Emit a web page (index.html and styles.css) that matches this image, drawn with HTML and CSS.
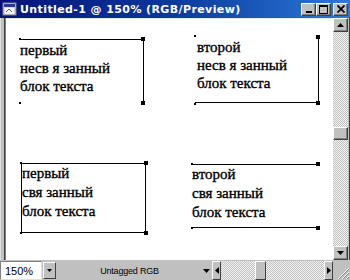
FILE: index.html
```html
<!DOCTYPE html>
<html>
<head>
<meta charset="utf-8">
<link rel="stylesheet" href="styles.css">
</head>
<body>
<div class="window">
  <div class="titlebar">
    <svg class="appicon" width="15" height="14" viewBox="0 0 15 14">
      <rect x="1" y="1" width="13" height="12" fill="#d8d8d8" stroke="#808080"/>
      <rect x="2" y="2" width="11" height="3" fill="#2a3a8a"/>
      <rect x="3" y="6" width="9" height="6" fill="#f4f4f4"/>
      <path d="M4 10 L7 7 L10 10" fill="none" stroke="#606060"/>
    </svg>
    <span class="title">Untitled-1 @ 150% (RGB/Preview)</span>
    <div class="winbtns">
      <span class="wbtn"><svg width="8" height="8" viewBox="0 0 8 8"><rect x="1" y="6" width="6" height="2" fill="#000"/></svg></span>
      <span class="wbtn"><svg width="9" height="9" viewBox="0 0 9 9"><rect x="0.5" y="0.5" width="8" height="8" fill="none" stroke="#000"/><rect x="0" y="0" width="9" height="2" fill="#000"/></svg></span>
      <span class="wbtn gap"><svg width="8" height="8" viewBox="0 0 8 8"><path d="M0.5 0.5 L7.5 7.5 M7.5 0.5 L0.5 7.5" stroke="#000" stroke-width="1.8"/></svg></span>
    </div>
  </div>
  <div class="main">
    <div class="frame-left"></div>
    <div class="canvas">
      <div class="tf tf1">
        первый<br>несв я занный<br>блок текста
        <span class="h dot tl"></span><span class="h sq tr"></span>
        <span class="h dot bl"></span><span class="h sq br"></span>
      </div>
      <div class="tf tf2">
        второй<br>несв я занный<br>блок текста
        <span class="h dot tl"></span><span class="h sq tr"></span>
        <span class="h dot bl"></span><span class="h sq br"></span>
      </div>
      <div class="tf tf3">
        первый<br>свя занный<br>блок текста
        <span class="h dot tl"></span><span class="h sq tr"></span>
        <span class="h dot bl"></span><span class="h sq br"></span>
      </div>
      <div class="tf tf4">
        второй<br>свя занный<br>блок текста
        <span class="h dot tl"></span><span class="h sq tr"></span>
        <span class="h dot bl"></span><span class="h sq br"></span>
      </div>
    </div>
    <div class="vscroll">
      <div class="sbtn"><svg width="7" height="4" viewBox="0 0 7 4"><path d="M3.5 0 L7 4 L0 4 Z" fill="#000"/></svg></div>
      <div class="vtrack"><div class="vthumb"></div></div>
      <div class="sbtn"><svg width="7" height="4" viewBox="0 0 7 4"><path d="M0 0 L7 0 L3.5 4 Z" fill="#000"/></svg></div>
    </div>
    <div class="frame-right"></div>
  </div>
  <div class="status">
    <div class="zoomfield">150%</div>
    <div class="ddbtn"><svg width="5" height="3" viewBox="0 0 5 3"><path d="M0 0 L5 0 L2.5 3 Z" fill="#000"/></svg></div>
    <div class="docinfo">Untagged RGB</div>
    <div class="infoarrow"><svg width="7" height="4" viewBox="0 0 7 4"><path d="M0 0 L7 0 L3.5 4 Z" fill="#000"/></svg></div>
    <div class="hscroll">
      <div class="hbtn"><svg width="4" height="7" viewBox="0 0 4 7"><path d="M4 0 L4 7 L0 3.5 Z" fill="#000"/></svg></div>
      <div class="htrack a"></div>
      <div class="hthumb"></div>
      <div class="htrack b"></div>
      <div class="hbtn"><svg width="4" height="7" viewBox="0 0 4 7"><path d="M0 0 L0 7 L4 3.5 Z" fill="#000"/></svg></div>
    </div>
    <div class="grip">
      <svg width="15" height="15" viewBox="0 0 15 15">
        <path d="M14 3 L3 14 M14 7 L7 14 M14 11 L11 14" stroke="#fff" stroke-width="1"/>
        <path d="M14 4 L4 14 M14 8 L8 14 M14 12 L12 14" stroke="#808080" stroke-width="1"/>
      </svg>
    </div>
  </div>
</div>
</body>
</html>
```

FILE: styles.css
```css
* { box-sizing: border-box; }
html, body { margin: 0; padding: 0; background: #c0c0c0; }
.window {
  width: 350px; height: 280px;
  display: flex; flex-direction: column;
  background: #c0c0c0;
  overflow: hidden;
}
.titlebar {
  height: 18px; flex: none;
  display: flex; align-items: center;
  background: linear-gradient(90deg, #06127a 0%, #0c3a9c 50%, #2a7ad6 100%);
  padding: 0 2px 0 2px;
}
.appicon { flex: none; margin-right: 3px; }
.title {
  flex: 1;
  color: #fff;
  font: bold 11px "DejaVu Sans", sans-serif;
  white-space: nowrap;
  letter-spacing: 0.4px;
}
.winbtns { display: flex; align-items: center; }
.wbtn {
  width: 15px; height: 13px;
  background: #c0c0c0;
  border-top: 1px solid #fff; border-left: 1px solid #fff;
  border-right: 1px solid #404040; border-bottom: 1px solid #404040;
  box-shadow: inset -1px -1px 0 #808080;
  display: flex; align-items: center; justify-content: center;
}
.wbtn.gap { margin-left: 2px; }

.main { flex: 1; display: flex; min-height: 0; }
.frame-left {
  width: 6px; flex: none;
  background: #c0c0c0;
  border-left: 1px solid #e0e0e0;
  box-shadow: inset -1px 0 0 #808080, inset -2px 0 0 #404040;
}
.canvas {
  flex: 1; position: relative; background: #fff;
  border-top: 1px solid #e8e8e8;
}
.frame-right { width: 2px; flex: none; background: #c0c0c0; box-shadow: inset -1px 0 0 #404040; }

.tf {
  position: absolute;
  font: 15px/18px "Liberation Serif", "Times New Roman", serif;
  color: #000;
  white-space: nowrap;
  -webkit-text-stroke: 0.35px #000;
}
.tf1 { left: 14px; top: 20px; width: 124px; height: 64px; border-top: 1px solid #000; border-right: 1px solid #000; padding-top: 1px; }
.tf2 { left: 189px; top: 17px; width: 124px; height: 67px; border-right: 1px solid #000; border-bottom: 1px solid #000; padding: 2px 0 0 2px; }
.tf3 { left: 15px; top: 144px; width: 125px; height: 70px; border: 1px solid #000; line-height: 19px; padding-top: 0; }
.tf4 { left: 186px; top: 145px; width: 126px; height: 64px; border-top: 1px solid #000; border-bottom: 1px solid #000; line-height: 19px; }

.h { position: absolute; background: #000; }
.h.sq { width: 4px; height: 4px; }
.h.dot { width: 2px; height: 2px; }
.h.tl { left: -1px; top: -1px; }
.h.bl { left: -1px; bottom: -1px; }
.h.tr { right: -2px; top: -2px; }
.h.br { right: -2px; bottom: -2px; }
.tf1 .h.tl, .tf1 .h.tr { top: -2px; }
.tf1 .h.tr { top: -3px; }
.tf2 .h.tr { top: -1px; }
.tf2 .h.br, .tf2 .h.bl { bottom: -3px; }
.tf3 .h.tl, .tf3 .h.tr { top: -3px; }
.tf3 .h.tl { left: -2px; top: -2px; }
.tf3 .h.bl { left: -2px; bottom: -2px; }
.tf3 .h.tr, .tf3 .h.br { right: -3px; }
.tf3 .h.br { bottom: -3px; }
.tf4 .h.tl, .tf4 .h.tr { top: -3px; }
.tf4 .h.tl { top: -2px; }
.tf4 .h.bl { bottom: -2px; }
.tf4 .h.br { bottom: -3px; }

.vscroll {
  width: 15px; flex: none;
  display: flex; flex-direction: column;
  background: repeating-conic-gradient(#c0c0c0 0 25%, #f4f4f4 0 50%) 0 0 / 2px 2px;
}
.sbtn {
  height: 14px; flex: none;
  background: #c0c0c0;
  border-top: 1px solid #fff; border-left: 1px solid #fff;
  border-right: 1px solid #404040; border-bottom: 1px solid #404040;
  box-shadow: inset -1px -1px 0 #808080;
  display: flex; align-items: center; justify-content: center;
}
.vtrack { flex: 1; }
.vthumb {
  margin-top: 95px; height: 13px;
  background: #c0c0c0;
  border-top: 1px solid #fff; border-left: 1px solid #fff;
  border-right: 1px solid #404040; border-bottom: 1px solid #404040;
  box-shadow: inset -1px -1px 0 #808080;
}

.status {
  height: 20px; flex: none;
  display: flex; align-items: stretch;
  background: #c0c0c0;
  border-top: 1px solid #c0c0c0;
}
.zoomfield {
  width: 42px; background: #fff;
  border-top: 1px solid #808080; border-left: 1px solid #808080;
  border-right: 1px solid #e0e0e0; border-bottom: 1px solid #e0e0e0;
  font: 11px "Liberation Sans", Arial, sans-serif;
  padding: 3px 0 0 4px;
  color: #000;
}
.ddbtn {
  width: 13px; margin: 1px 0 1px 1px;
  background: #c0c0c0;
  border-top: 1px solid #fff; border-left: 1px solid #fff;
  border-right: 1px solid #404040; border-bottom: 1px solid #404040;
  display: flex; align-items: center; justify-content: center;
}
.docinfo {
  flex: 1;
  font: 9px "Liberation Sans", Arial, sans-serif;
  color: #000;
  display: flex; align-items: center; justify-content: center;
  padding-left: 3px;
  letter-spacing: -0.2px;
}
.infoarrow { width: 12px; display: flex; align-items: center; justify-content: center; }
.hscroll { width: 121px; display: flex; flex: none; }
.hbtn {
  width: 9px; flex: none;
  background: #c0c0c0;
  border-top: 1px solid #fff; border-left: 1px solid #fff;
  border-right: 1px solid #404040; border-bottom: 1px solid #404040;
  display: flex; align-items: center; justify-content: center;
}
.htrack { background: repeating-conic-gradient(#c0c0c0 0 25%, #f4f4f4 0 50%) 0 0 / 2px 2px; }
.htrack.a { width: 34px; }
.htrack.b { flex: 1; }
.hthumb {
  width: 11px;
  background: #c0c0c0;
  border-top: 1px solid #fff; border-left: 1px solid #fff;
  border-right: 1px solid #404040; border-bottom: 1px solid #404040;
}
.grip { width: 17px; flex: none; display: flex; align-items: flex-end; justify-content: flex-end; }
.grip svg { display: block; }
```
